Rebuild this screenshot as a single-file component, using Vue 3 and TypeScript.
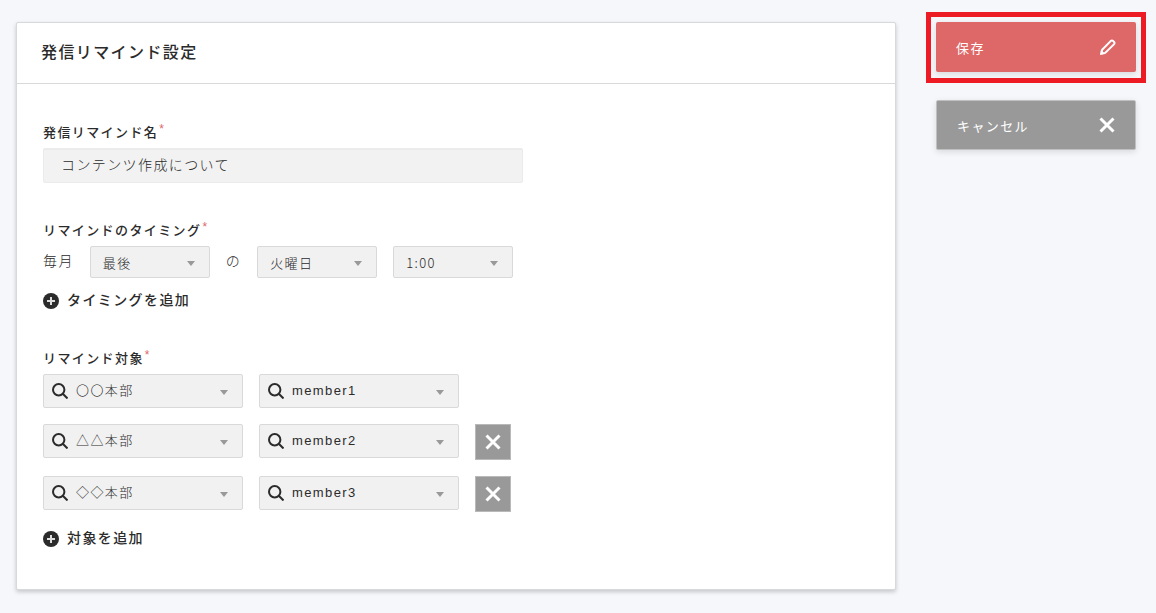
<script setup lang="ts">
import { ref } from 'vue'

interface Target {
  department: string
  member: string
}

const name = ref('コンテンツ作成について')
const week = ref('最後')
const day = ref('火曜日')
const time = ref('1:00')

const targets = ref<Target[]>([
  { department: '〇〇本部', member: 'member1' },
  { department: '△△本部', member: 'member2' },
  { department: '◇◇本部', member: 'member3' },
])

const departments = ['〇〇本部', '△△本部', '◇◇本部']
const members = ['member1', 'member2', 'member3']

function removeTarget(index: number) {
  targets.value.splice(index, 1)
}

function addTarget() {
  targets.value.push({ department: departments[0], member: members[0] })
}
</script>

<template>
  <form class="page" @submit.prevent>
    <main class="card">
      <header class="card-header">
        <h1>発信リマインド設定</h1>
      </header>
      <div class="card-body">
        <section class="field">
          <label class="label" for="reminder-name">発信リマインド名<span class="required">*</span></label>
          <input id="reminder-name" v-model="name" class="text-input" type="text" />
        </section>

        <section class="field" role="group" aria-labelledby="timing-label">
          <div id="timing-label" class="label">リマインドのタイミング<span class="required">*</span></div>
          <div class="timing">
            <span class="word">毎月</span>
            <div class="select small">
              <select v-model="week" aria-label="週">
                <option>最後</option>
              </select>
              <svg class="arrow" viewBox="0 0 8 5" aria-hidden="true"><path d="M0 0h8L4 5z" /></svg>
            </div>
            <span class="word">の</span>
            <div class="select small">
              <select v-model="day" aria-label="曜日">
                <option>火曜日</option>
              </select>
              <svg class="arrow" viewBox="0 0 8 5" aria-hidden="true"><path d="M0 0h8L4 5z" /></svg>
            </div>
            <div class="select small">
              <select v-model="time" aria-label="時刻">
                <option>1:00</option>
              </select>
              <svg class="arrow" viewBox="0 0 8 5" aria-hidden="true"><path d="M0 0h8L4 5z" /></svg>
            </div>
          </div>
          <button type="button" class="add">
            <svg class="plus" viewBox="0 0 16 16" aria-hidden="true">
              <circle cx="8" cy="8" r="8" />
              <path d="M8 4v8M4 8h8" />
            </svg>
            タイミングを追加
          </button>
        </section>

        <section class="field" role="group" aria-labelledby="target-label">
          <div id="target-label" class="label">リマインド対象<span class="required">*</span></div>
          <div class="targets">
            <div v-for="(target, i) in targets" :key="i" class="target">
              <div class="select search">
                <svg class="glass" viewBox="0 0 16 16" aria-hidden="true">
                  <circle cx="6.7" cy="6.7" r="5.7" />
                  <path d="M10.8 10.8l4.7 4.7" />
                </svg>
                <select v-model="target.department" class="dept" aria-label="部署">
                  <option v-for="d in departments" :key="d">{{ d }}</option>
                </select>
                <svg class="arrow" viewBox="0 0 8 5" aria-hidden="true"><path d="M0 0h8L4 5z" /></svg>
              </div>
              <div class="select search">
                <svg class="glass" viewBox="0 0 16 16" aria-hidden="true">
                  <circle cx="6.7" cy="6.7" r="5.7" />
                  <path d="M10.8 10.8l4.7 4.7" />
                </svg>
                <select v-model="target.member" aria-label="メンバー">
                  <option v-for="m in members" :key="m">{{ m }}</option>
                </select>
                <svg class="arrow" viewBox="0 0 8 5" aria-hidden="true"><path d="M0 0h8L4 5z" /></svg>
              </div>
              <button v-if="i > 0" type="button" class="remove" aria-label="削除" @click="removeTarget(i)">
                <svg class="cross" viewBox="0 0 16 16" aria-hidden="true"><path d="M1.5 1.5l13 13M14.5 1.5l-13 13" /></svg>
              </button>
            </div>
          </div>
          <button type="button" class="add after-targets" @click="addTarget">
            <svg class="plus" viewBox="0 0 16 16" aria-hidden="true">
              <circle cx="8" cy="8" r="8" />
              <path d="M8 4v8M4 8h8" />
            </svg>
            対象を追加
          </button>
        </section>
      </div>
    </main>

    <aside class="actions">
      <div class="highlight">
        <button type="submit" class="action save">
          保存
          <svg class="pencil" viewBox="0 0 16 16" aria-hidden="true">
            <path d="M1.6 14.4l.5-3.6L10.6 2.1a1.9 1.9 0 0 1 2.6 0l.7.7a1.9 1.9 0 0 1 0 2.6L5.2 13.9z" />
            <path class="tip" d="M0 16l.9-5 4.1 4.1z" />
          </svg>
        </button>
      </div>
      <button type="button" class="action cancel">
        キャンセル
        <svg class="cross" viewBox="0 0 16 16" aria-hidden="true"><path d="M1.5 1.5l13 13M14.5 1.5l-13 13" /></svg>
      </button>
    </aside>
  </form>
</template>

<style>
body {
  margin: 0;
  background: #f5f7fb;
}
</style>

<style scoped>
.page {
  display: flex;
  align-items: flex-start;
  gap: 30px;
  padding: 12px 10px 23px 16px;
  color: #2b2b2b;
  font-family: "Liberation Sans", "Noto Sans CJK JP", sans-serif;
  font-size: 14px;
  letter-spacing: 0.1em;
}

.page * {
  box-sizing: border-box;
}

button,
input,
select {
  margin: 0;
  color: inherit;
  font: inherit;
  letter-spacing: inherit;
}

button {
  cursor: pointer;
}

.card {
  flex: 1;
  min-width: 0;
  margin-top: 10px;
  border: 1px solid #d8d9da;
  border-radius: 2px;
  background: #fff;
  box-shadow: 0 2px 4px rgba(0, 0, 0, 0.2);
}

.card-header {
  padding: 18px 24px;
  border-bottom: 1px solid #d8d9da;
}

h1 {
  margin: 0;
  font-size: 16px;
  font-weight: 500;
  line-height: 24px;
}

.card-body {
  display: flex;
  flex-direction: column;
  gap: 38px;
  padding: 39px 26px 40px;
}

.field {
  display: flex;
  flex-direction: column;
  align-items: flex-start;
}

.label {
  display: flex;
  margin-bottom: 5px;
  font-size: 13px;
  font-weight: 500;
  line-height: 20px;
}

.required {
  margin-left: 1px;
  color: #de6868;
  font-size: 12px;
  line-height: 12px;
}

.text-input {
  width: 480px;
  max-width: 100%;
  height: 35px;
  padding: 0 17px 4px;
  border: 1px solid #ebebeb;
  border-radius: 2px;
  background: #f2f2f2;
  box-shadow: inset 0 1px 1px rgba(0, 0, 0, 0.03);
  font-weight: 300;
}

.timing {
  display: flex;
  align-items: center;
  gap: 16px;
  margin-bottom: 12px;
  font-weight: 300;
}

.word {
  line-height: 20px;
  padding-bottom: 2px;
}

.select {
  position: relative;
}

.select select {
  display: block;
  width: 100%;
  border: 1px solid #d9d9d9;
  border-radius: 2px;
  background: #f1f1f1;
  appearance: none;
  font-size: 13px;
}

.small {
  width: 120px;
}

.small select {
  height: 32px;
  padding: 0 24px 0 12px;
  font-family: "Noto Sans CJK JP", sans-serif;
}

.search {
  width: 200px;
}

.search select {
  height: 34px;
  padding: 0 24px 2px 32px;
}

.search .dept {
  font-weight: 300;
}

.arrow {
  position: absolute;
  top: 50%;
  right: 15px;
  width: 8px;
  height: 5px;
  margin-top: -1px;
  fill: #999;
}

.glass {
  position: absolute;
  top: 9px;
  left: 9px;
  width: 16px;
  height: 16px;
  fill: none;
  stroke: #2b2b2b;
  stroke-width: 2;
}

.targets {
  display: flex;
  flex-direction: column;
  gap: 16px;
}

.target {
  display: flex;
  align-items: flex-start;
  gap: 16px;
}

.remove {
  display: flex;
  align-items: center;
  justify-content: center;
  width: 36px;
  height: 36px;
  padding: 0;
  border: 1px solid #b9b9b9;
  background: #999;
}

.cross {
  width: 16px;
  height: 16px;
  fill: none;
  stroke: #fff;
  stroke-width: 3;
}

.add {
  display: flex;
  align-items: center;
  gap: 8px;
  padding: 0;
  border: 0;
  background: none;
  font-weight: 500;
  line-height: 21px;
}

.after-targets {
  margin-top: 16px;
}

.plus {
  width: 16px;
  height: 16px;
  fill: #2b2b2b;
  stroke: #ddd;
  stroke-width: 2;
}

.plus circle {
  stroke: none;
}

.actions {
  display: flex;
  flex-direction: column;
  flex: 0 0 220px;
  gap: 17px;
}

.highlight {
  padding: 5px 5px 6px;
  border: 5px solid #ed1c24;
}

.action {
  display: flex;
  align-items: center;
  justify-content: space-between;
  width: 100%;
  height: 50px;
  padding: 0 20px;
  border: 1px solid #c0c0c0;
  border-radius: 2px;
  color: #fff;
  box-shadow: 0 2px 6px rgba(0, 0, 0, 0.12);
  font-size: 13px;
}

.save {
  border: 0;
  background: #de6868;
}

.cancel {
  align-self: center;
  width: 200px;
  background: #999;
}

.pencil {
  width: 16px;
  height: 16px;
  fill: none;
  stroke: #fff;
  stroke-width: 2;
}

.pencil .tip {
  fill: #fff;
  stroke: none;
}
</style>
